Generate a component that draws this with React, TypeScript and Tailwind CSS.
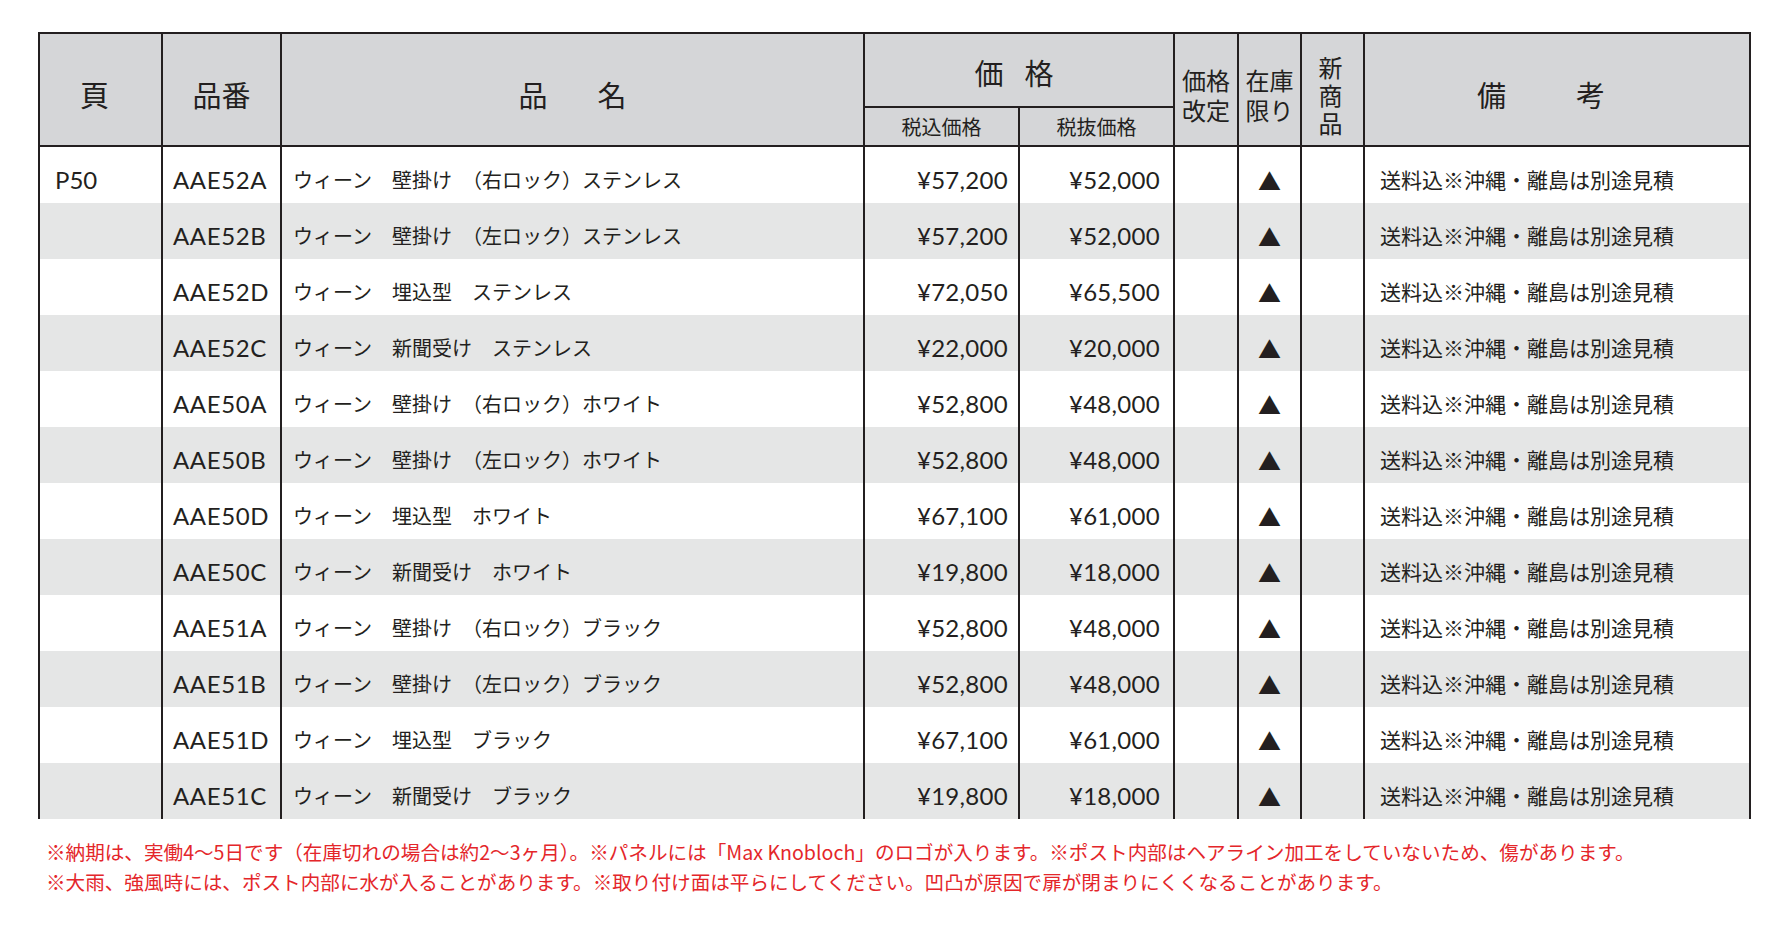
const rows = [
  { page: 'P50', code: 'AAE52A', name: 'ウィーン　壁掛け　（右ロック）ステンレス', inc: '¥57,200', exc: '¥52,000' },
  { page: '', code: 'AAE52B', name: 'ウィーン　壁掛け　（左ロック）ステンレス', inc: '¥57,200', exc: '¥52,000' },
  { page: '', code: 'AAE52D', name: 'ウィーン　埋込型　ステンレス', inc: '¥72,050', exc: '¥65,500' },
  { page: '', code: 'AAE52C', name: 'ウィーン　新聞受け　ステンレス', inc: '¥22,000', exc: '¥20,000' },
  { page: '', code: 'AAE50A', name: 'ウィーン　壁掛け　（右ロック）ホワイト', inc: '¥52,800', exc: '¥48,000' },
  { page: '', code: 'AAE50B', name: 'ウィーン　壁掛け　（左ロック）ホワイト', inc: '¥52,800', exc: '¥48,000' },
  { page: '', code: 'AAE50D', name: 'ウィーン　埋込型　ホワイト', inc: '¥67,100', exc: '¥61,000' },
  { page: '', code: 'AAE50C', name: 'ウィーン　新聞受け　ホワイト', inc: '¥19,800', exc: '¥18,000' },
  { page: '', code: 'AAE51A', name: 'ウィーン　壁掛け　（右ロック）ブラック', inc: '¥52,800', exc: '¥48,000' },
  { page: '', code: 'AAE51B', name: 'ウィーン　壁掛け　（左ロック）ブラック', inc: '¥52,800', exc: '¥48,000' },
  { page: '', code: 'AAE51D', name: 'ウィーン　埋込型　ブラック', inc: '¥67,100', exc: '¥61,000' },
  { page: '', code: 'AAE51C', name: 'ウィーン　新聞受け　ブラック', inc: '¥19,800', exc: '¥18,000' },
];

const jp = "font-['Noto_Sans_CJK_JP',sans-serif]";
const latin = "font-['Lato','Noto_Sans_CJK_JP',sans-serif]";
const cols = 'grid-cols-[121px_119px_583px_155px_155px_64px_63px_63px_386px]';

export default function App() {
  return (
    <div className={`min-h-screen bg-white pt-[32px] pl-[38px] text-[#231f20] ${jp}`}>
      <div className="w-[1713px]">
        {/* header */}
        <div className={`grid ${cols} grid-rows-[72px_39px] border-2 border-[#231f20] bg-[#d5d6d8]`}>
          <div className="row-span-2 flex items-center justify-center pt-[10px] pr-[12px] text-[29px]">頁</div>
          <div className="row-span-2 flex items-center justify-center border-l-2 border-[#231f20] pt-[10px] text-[29px]">品番</div>
          <div className="row-span-2 flex items-center justify-center gap-[50px] border-l-2 border-[#231f20] pt-[10px] text-[29px]">
            <span>品</span>
            <span>名</span>
          </div>
          <div className="col-span-2 flex items-center justify-center gap-[21px] border-l-2 border-[#231f20] pt-[6px] pr-[10px] text-[29px]">
            <span>価</span>
            <span>格</span>
          </div>
          <div className="col-start-6 row-span-2 row-start-1 flex flex-col items-center justify-center border-l-2 border-[#231f20] pt-[10px] text-[24px] leading-[30px]">
            <span>価格</span>
            <span>改定</span>
          </div>
          <div className="col-start-7 row-span-2 row-start-1 flex flex-col items-center justify-center border-l-2 border-[#231f20] pt-[10px] text-[24px] leading-[30px]">
            <span>在庫</span>
            <span>限り</span>
          </div>
          <div className="col-start-8 row-span-2 row-start-1 flex flex-col items-center justify-center border-l-2 border-[#231f20] pt-[10px] pr-[4px] text-[24px] leading-[28px]">
            <span>新</span>
            <span>商</span>
            <span>品</span>
          </div>
          <div className="col-start-9 row-span-2 row-start-1 flex items-center justify-center gap-[70px] border-l-2 border-[#231f20] pt-[10px] pr-[32px] text-[29px]">
            <span>備</span>
            <span>考</span>
          </div>
          <div className="col-start-4 row-start-2 flex items-center justify-center border-t-2 border-l-2 border-[#231f20] text-[20px]">税込価格</div>
          <div className="col-start-5 row-start-2 flex items-center justify-center border-t-2 border-l-2 border-[#231f20] text-[20px]">税抜価格</div>
        </div>

        {/* body */}
        <div className="border-x-2 border-[#231f20]">
          {rows.map((r, i) => (
            <div key={r.code} className={`grid ${cols} h-[56px] ${i % 2 === 1 ? 'bg-[#e5e6e6]' : 'bg-white'}`}>
              <div className={`flex items-center pt-[10px] pl-[15px] text-[24px] ${latin}`}>{r.page}</div>
              <div className={`flex items-center border-l-2 border-[#231f20] pt-[10px] pl-[10px] text-[24px] tracking-[0.6px] ${latin}`}>{r.code}</div>
              <div className="flex items-center border-l-2 border-[#231f20] pt-[10px] pl-[11px] text-[20px] whitespace-nowrap">{r.name}</div>
              <div className={`flex items-center justify-end border-l-2 border-[#231f20] pt-[10px] pr-[10px] text-[24px] tracking-[0.3px] ${latin}`}>{r.inc}</div>
              <div className={`flex items-center justify-end border-l-2 border-[#231f20] pt-[10px] pr-[13px] text-[24px] tracking-[0.3px] ${latin}`}>{r.exc}</div>
              <div className="border-l-2 border-[#231f20]" />
              <div className="flex items-center justify-center border-l-2 border-[#231f20] pt-[10px] text-[23px]">▲</div>
              <div className="border-l-2 border-[#231f20]" />
              <div className="flex items-center border-l-2 border-[#231f20] pt-[10px] pl-[15px] text-[21px] whitespace-nowrap">送料込※沖縄・離島は別途見積</div>
            </div>
          ))}
        </div>
      </div>

      {/* notes */}
      <div className="mt-[18px] pl-[8px] text-[19.6px] leading-[30px] whitespace-nowrap text-[#e4262a]">
        <p>※納期は、実働4～5日です（在庫切れの場合は約2～3ヶ月）。※パネルには「Max Knobloch」のロゴが入ります。※ポスト内部はヘアライン加工をしていないため、傷があります。</p>
        <p>※大雨、強風時には、ポスト内部に水が入ることがあります。※取り付け面は平らにしてください。凹凸が原因で扉が閉まりにくくなることがあります。</p>
      </div>
    </div>
  );
}
